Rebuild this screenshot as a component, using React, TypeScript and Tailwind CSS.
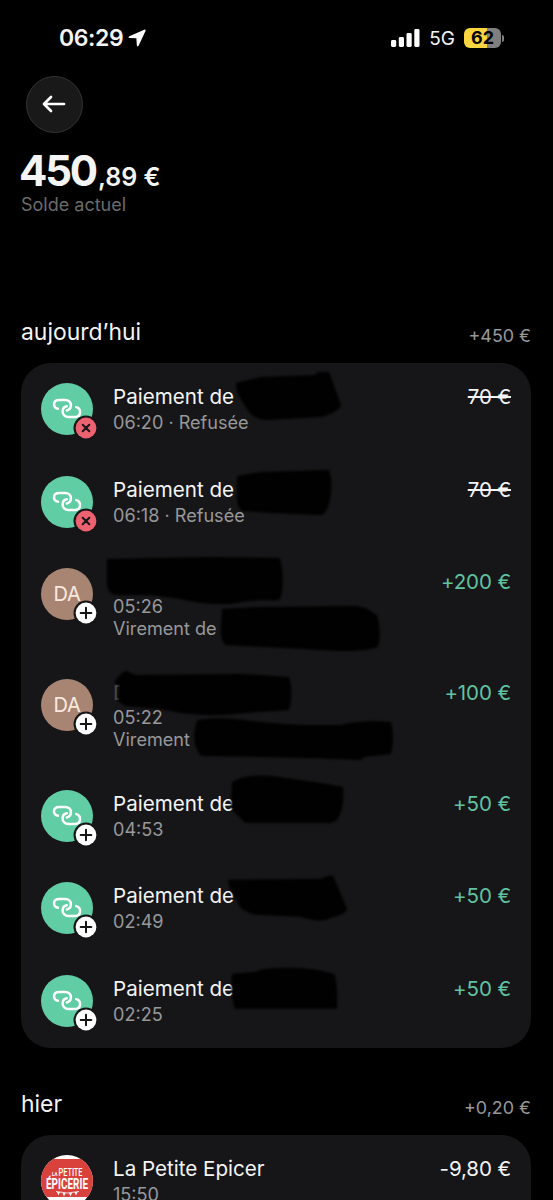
import { clsx } from 'clsx'

type Badge = 'plus' | 'cross'

interface Transaction {
  kind: 'link' | 'initials' | 'shop'
  badge?: Badge
  title?: string
  dimmed?: boolean
  lines: string[]
  amount: string
  tone: 'refused' | 'income' | 'expense'
}

const today: Transaction[] = [
  { kind: 'link', badge: 'cross', title: 'Paiement de', lines: ['06:20 · Refusée'], amount: '70 €', tone: 'refused' },
  { kind: 'link', badge: 'cross', title: 'Paiement de', lines: ['06:18 · Refusée'], amount: '70 €', tone: 'refused' },
  { kind: 'initials', badge: 'plus', lines: ['05:26', 'Virement de'], amount: '+200 €', tone: 'income' },
  { kind: 'initials', badge: 'plus', title: 'D', dimmed: true, lines: ['05:22', 'Virement'], amount: '+100 €', tone: 'income' },
  { kind: 'link', badge: 'plus', title: 'Paiement de', lines: ['04:53'], amount: '+50 €', tone: 'income' },
  { kind: 'link', badge: 'plus', title: 'Paiement de', lines: ['02:49'], amount: '+50 €', tone: 'income' },
  { kind: 'link', badge: 'plus', title: 'Paiement de', lines: ['02:25'], amount: '+50 €', tone: 'income' },
]

const yesterday: Transaction[] = [
  { kind: 'shop', title: 'La Petite Epicer', lines: ['15:50'], amount: '-9,80 €', tone: 'expense' },
]

// Marker strokes hiding the names, in card coordinates
const strokes = [
  'M215 20 L240 14 L294 12 L297 9 L308 9 L320 42 Q318 49 300 54 L245 57 Q232 56 226 46 Q214 30 215 20Z',
  'M216 113 L240 109 L308 107 Q313 122 308 140 Q305 152 300 152 L250 150 L222 148 Q215 145 216 130Z',
  'M86 196 L190 194 L259 195 Q264 215 260 234 Q258 239 248 237 Q228 237 210 241 Q180 242 160 236 L130 232 L95 232 Q86 231 86 220Z',
  'M201 246 L240 244 L335 243 Q348 245 352 250 L356 252 Q361 270 357 284 Q340 290 300 287 L205 282 Q199 278 200 264Z',
  'M93 320 Q99 309 106 308 L114 312 L220 311 L268 314 Q273 330 268 347 L225 350 Q190 354 160 350 L140 346 L104 343 L97 338 L98 322Z',
  'M176 357 Q200 353 230 358 Q270 363 320 362 Q340 357 370 359 Q374 376 370 391 L343 394 L340 397 L290 395 L240 394 L180 393 Q171 382 174 366Z',
  'M211 419 Q225 411 250 413 L300 420 L322 424 Q324 445 316 457 Q308 462 306 460 L224 460 Q216 452 210 445Z',
  'M207 517 L300 516 Q306 512 312 513 L326 546 Q325 552 310 555 Q300 561 280 554 L235 552 Q220 549 217 540 Q208 528 207 517Z',
  'M211 611 L236 609 Q240 605 270 605 Q300 606 314 612 Q317 628 316 646 L214 646 Q209 630 211 611Z',
]

function StatusBar() {
  return (
    <div className="flex h-[76px] items-center pl-[59px] pr-[49px]">
      <span className="text-[23px] leading-none font-semibold tracking-[-0.4px]">06:29</span>
      <svg className="ml-[5px] h-[18px] w-[18px]" viewBox="0 0 18 18" fill="white">
        <path d="M16.2 0.7 L1.4 7.2 Q-.5 8.6 1.7 9 L8.4 9.3 L8.8 16 Q9.3 18.5 10.7 16.5 L17.5 2 Q18 .1 16.2 .7Z" />
      </svg>
      <div className="ml-auto flex items-center">
        <svg className="h-[18px] w-[29px]" viewBox="0 0 29 18" fill="white">
          <rect x="0" y="11" width="5.2" height="7" rx="1.4" />
          <rect x="7.8" y="8" width="5.2" height="10" rx="1.4" />
          <rect x="15.5" y="4" width="5.2" height="14" rx="1.4" />
          <rect x="23.3" y="0" width="5.2" height="18" rx="1.4" />
        </svg>
        <span className="ml-[9px] text-[19px] leading-none">5G</span>
        <div className="ml-[9px] flex h-5 w-[37px] items-center justify-center rounded-[6px] bg-linear-to-r from-[#fbd53f] from-62% to-[#7f7f7f] to-62%">
          <span className="text-[18px] leading-none font-bold text-black">62</span>
        </div>
        <div className="ml-px h-[7px] w-[2px] rounded-r-full bg-[#7f7f7f]" />
      </div>
    </div>
  )
}

function LinkIcon() {
  return (
    <svg className="size-[52px]" viewBox="0 0 52 52" fill="none" stroke="white" strokeWidth="2.5" strokeLinecap="round">
      <path d="M17 25.7 C14.4 25.2 13 23.4 13 21.2 C13 18.6 15.2 16.9 18 16.9 H24 C27.8 16.9 29.9 19.2 29.9 22 C29.9 25 28.4 26.9 25.8 27.4" />
      <path d="M35.2 24.1 C37.8 24.7 39 26.4 39 28.9 C39 32 37.2 33.9 34.2 33.9 H27.5 C23.8 33.9 21.6 31.5 21.6 28.5 C21.6 25.7 23.2 23.8 25.8 23.3" />
    </svg>
  )
}

function ShopLogo() {
  return (
    <svg className="size-[52px]" viewBox="0 0 52 52">
      <rect width="52" height="52" fill="#fff" />
      <rect y="4" width="52" height="38" fill="#d8413c" />
      <g fill="#fff" fontFamily="Roboto, sans-serif" fontWeight="700">
        <text x="11" y="20.5" fontSize="6" textLength="5.5" lengthAdjust="spacingAndGlyphs">LA</text>
        <text x="17.5" y="20.5" fontSize="10" fontWeight="500" textLength="24" lengthAdjust="spacingAndGlyphs">PETITE</text>
        <text x="5" y="33.5" fontSize="14" textLength="42" lengthAdjust="spacingAndGlyphs">ÉPICERIE</text>
      </g>
      <path d="M15 36.5 Q26 39.5 38 36.5" fill="none" stroke="#fff" strokeWidth=".8" />
      <path d="M16 37h3l-1.5 3.5zM21.5 38h3l-1.5 3.5zM28 38h3l-1.5 3.5zM33.5 37h3l-1.5 3.5z" fill="#fff" />
    </svg>
  )
}

function Avatar({ kind, badge }: { kind: Transaction['kind']; badge?: Badge }) {
  return (
    <div className="relative size-[52px] shrink-0">
      <div
        className={clsx(
          'flex size-[52px] items-center justify-center overflow-hidden rounded-full',
          kind === 'link' && 'bg-[#61cda4]',
          kind === 'initials' && 'bg-[#a88573]',
        )}
      >
        {kind === 'link' && <LinkIcon />}
        {kind === 'initials' && <span className="text-[20px] tracking-[-0.3px] text-[#fbe9e0]">DA</span>}
        {kind === 'shop' && <ShopLogo />}
      </div>
      {badge && (
        <svg className="absolute top-[32px] left-[32px] size-[26px]" viewBox="0 0 26 26" fill="none" strokeLinecap="round">
          <circle cx="13" cy="13" r="12.5" fill="#161618" />
          <circle cx="13" cy="13" r="10.4" fill={badge === 'plus' ? '#fff' : '#ed6270'} />
          <path
            d={badge === 'plus' ? 'M13 7.7v10.6M7.7 13h10.6' : 'M9.7 9.7l6.6 6.6M16.3 9.7l-6.6 6.6'}
            stroke="#161618"
            strokeWidth="2"
          />
        </svg>
      )}
    </div>
  )
}

function Row({ tx }: { tx: Transaction }) {
  return (
    <div className={clsx('flex px-5 pt-5', tx.lines.length > 1 ? 'h-[110.7px]' : 'h-[92.7px]')}>
      <Avatar kind={tx.kind} badge={tx.badge} />
      <div className="ml-5 flex-1">
        <div className={clsx('h-[27px] text-[20.6px] leading-[27px]', tx.dimmed && 'text-[#48484a]')}>{tx.title}</div>
        <div className={clsx('text-[18.1px] leading-[22px] text-[#98989a]', tx.lines.length === 1 && 'pt-px')}>
          {tx.lines.map((line) => (
            <div key={line}>{line}</div>
          ))}
        </div>
      </div>
      <div
        className={clsx(
          'text-[20.5px] leading-[27px] tracking-[-0.1px]',
          tx.tone === 'income' && 'text-[#61c3a0]',
          tx.tone === 'refused' && 'line-through decoration-2',
        )}
      >
        {tx.amount}
      </div>
    </div>
  )
}

function DayHeader({ label, total }: { label: string; total: string }) {
  return (
    <div className="flex h-[30px] items-start justify-between pr-[22px] pl-[21px]">
      <h2 className="text-[22.9px] leading-[30px]">{label}</h2>
      <span className="pt-1 text-[17.9px] leading-[30px] text-[#98989a]">{total}</span>
    </div>
  )
}

export default function App() {
  return (
    <div className="h-[1200px] w-[553px] overflow-hidden bg-black font-['Inter',sans-serif] text-[#f4f4f4]">
      <StatusBar />
      <button className="ml-[26px] flex size-[57px] items-center justify-center rounded-full border border-[#333331] bg-[#191919]">
        <svg className="mr-0.5 mb-px h-[18px] w-6" viewBox="0 0 24 18" fill="none" stroke="white" strokeWidth="2.7" strokeLinecap="round" strokeLinejoin="round">
          <path d="M22 9H2.5M9 2L2 9l7 7" />
        </svg>
      </button>

      <div className="mt-4 ml-[19px] flex h-[44px] items-baseline font-bold">
        <span className="text-[42px] leading-[43px] tracking-[-2.2px]">450</span>
        <span className="ml-0.5 text-[25px] leading-none font-semibold">,89 €</span>
      </div>
      <p className="ml-[21px] text-[18px] leading-6 text-[#6b6b6b]">Solde actuel</p>

      <div className="mt-[100px]">
        <DayHeader label="aujourd’hui" total="+450 €" />
      </div>
      <section className="relative mt-4 mr-[22px] ml-[21px] rounded-[30px] bg-[#161618]">
        {today.map((tx) => (
          <Row key={tx.lines[0]} tx={tx} />
        ))}
        <svg className="absolute inset-0 h-full w-full blur-[1px]" viewBox="0 0 510 685" fill="#010101">
          {strokes.map((d) => (
            <path key={d} d={d} />
          ))}
        </svg>
      </section>

      <div className="mt-[41px]">
        <DayHeader label="hier" total="+0,20 €" />
      </div>
      <section className="mt-4 mr-[22px] ml-[21px] rounded-t-[30px] bg-[#161618]">
        {yesterday.map((tx) => (
          <Row key={tx.lines[0]} tx={tx} />
        ))}
      </section>
    </div>
  )
}
